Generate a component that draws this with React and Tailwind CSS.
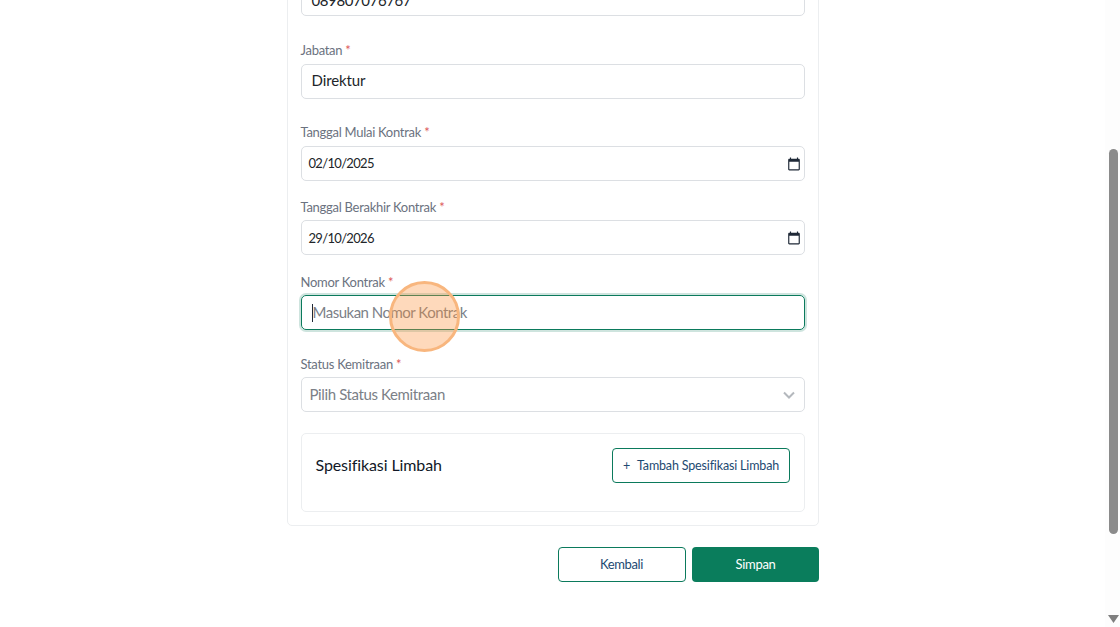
const font = { fontFamily: '"Lato", "Liberation Sans", sans-serif' };

function Label({ children, className = "" }) {
  return (
    <div className={`h-[20px] text-[13px] leading-[20px] tracking-[-0.28px] text-[#6b7280] ${className}`}>
      {children} <span className="text-[#dc5a5a]">*</span>
    </div>
  );
}

function DateField({ value, textClass = "" }) {
  return (
    <div className="mt-[3px] flex h-[35px] items-center justify-between rounded-[5px] border border-[#dcdfe3] bg-white pl-[7px] pr-[3px] text-[13px] tracking-[-0.68px] text-[#212529]">
      <span className={textClass}>{value}</span>
      <svg width="14" height="14" viewBox="0 0 24 24" fill="#1f2937">
        <path d="M20 3h-1V1h-2v2H7V1H5v2H4c-1.1 0-2 .9-2 2v16c0 1.1.9 2 2 2h16c1.1 0 2-.9 2-2V5c0-1.1-.9-2-2-2zm0 18H4V8h16v13z" />
      </svg>
    </div>
  );
}

export default function App() {
  return (
    <div className="flex h-[627px] w-[1120px] overflow-hidden bg-white" style={font}>
      <main className="relative flex h-full flex-1 flex-col items-center overflow-hidden">
        <div className="mt-[-20px] w-[532px]">
          <div className="h-[546px] rounded-b-[5px] border border-[#eceef0] bg-white px-[13px]">
            <div className="flex h-[35px] items-center rounded-[5px] border border-[#dcdfe3] px-[10px] pt-[3px] text-[15px] tracking-[-0.4px] text-[#212529]">
              089807076767
            </div>
            <Label className="mt-[24px]">Jabatan</Label>
            <div className="mt-[4px] flex h-[35px] items-center rounded-[5px] border border-[#dcdfe3] px-[10px] pb-[2px] text-[15px] tracking-[-0.1px] text-[#212529]">
              Direktur
            </div>
            <Label className="mt-[23px]">Tanggal Mulai Kontrak</Label>
            <div className="h-px" />
            <DateField value="02/10/2025" />
            <Label className="mt-[16px]">Tanggal Berakhir Kontrak</Label>
            <DateField value="29/10/2026" textClass="relative top-[1px]" />
            <Label className="mt-[17px]">Nomor Kontrak</Label>
            <div className="mt-[3px] flex h-[35px] items-center rounded-[5px] border border-[#0b7a5c] pl-[10px] text-[15px] tracking-[-0.5px] text-[#7b8087] shadow-[0_0_0_2px_rgba(11,122,92,0.2)]">
              <span className="h-[18px] w-px bg-[#1f2937]" />
              <span>Masukan Nomor Kontrak</span>
            </div>
            <Label className="mt-[24px]">Status Kemitraan</Label>
            <div className="mt-[3px] flex h-[35px] items-center justify-between rounded-[5px] border border-[#dcdfe3] pl-[8px] pr-[8px] text-[15px] tracking-[-0.38px] text-[#7b8087]">
              <span>Pilih Status Kemitraan</span>
              <svg width="14" height="14" viewBox="0 0 14 14" fill="none" stroke="#b4b8bd" strokeWidth="2">
                <path d="M2 4.5l5 5 5-5" />
              </svg>
            </div>
            <div className="mt-[21px] h-[79px] rounded-[5px] border border-[#eceef0] px-[14px] pt-[14px]">
              <div className="flex items-center justify-between">
                <span className="relative top-[-1px] text-[16px] tracking-[-0.1px] text-[#111827]">Spesifikasi Limbah</span>
                <button className="flex h-[35px] w-[178px] items-center justify-center gap-[7px] rounded-[4px] border border-[#0b7a5c] bg-white pt-[1px] pl-[1px] text-[12.5px] tracking-[-0.16px] text-[#1d4a72]">
                  <span>+</span>
                  <span>Tambah Spesifikasi Limbah</span>
                </button>
              </div>
            </div>
          </div>
          <div className="mt-[21px] flex justify-end gap-[6px]">
            <button className="h-[35px] w-[128px] rounded-[4px] border border-[#0b7a5c] bg-white text-[13px] tracking-[-0.4px] text-[#1d4a72]">
              Kembali
            </button>
            <button className="h-[35px] w-[127px] rounded-[4px] bg-[#0a7d5c] pl-[1px] text-[13px] tracking-[-0.3px] text-white">
              Simpan
            </button>
          </div>
        </div>
        <div className="absolute left-[389px] top-[281px] h-[71px] w-[71px] rounded-full border-[3px] border-[#f8b67e] bg-[rgba(251,146,60,0.35)]" />
      </main>
      <aside className="flex w-[15px] flex-col items-center bg-[#fdfdfd] pl-px">
        <div className="mt-[149px] h-[385px] w-[9px] rounded-full bg-[#8b8b8b]" />
        <svg className="mt-[81px]" width="11" height="8" viewBox="0 0 11 8" fill="#7f7f7f">
          <path d="M0 0h11L5.5 8z" />
        </svg>
      </aside>
    </div>
  );
}
